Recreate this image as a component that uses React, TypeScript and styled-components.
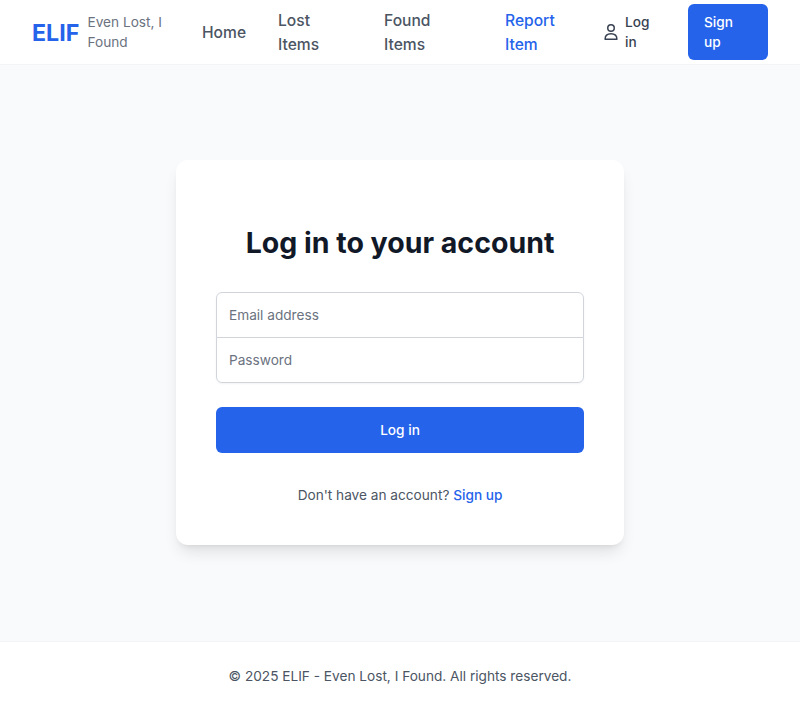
import React from "react";
import styled, { createGlobalStyle } from "styled-components";

const GlobalStyle = createGlobalStyle`
  *, *::before, *::after { box-sizing: border-box; }
  body {
    margin: 0;
    background: #f9fafb;
    font-family: Inter, "Liberation Sans", sans-serif;
    font-size: 16px;
    line-height: 24px;
    color: #111827;
  }
  a { text-decoration: none; }
`;

const Page = styled.div`
  min-height: 710px;
  display: flex;
  flex-direction: column;
`;

const Header = styled.header`
  height: 65px;
  padding: 0 32px;
  display: flex;
  align-items: center;
  background: #fff;
  border-bottom: 1px solid #f3f4f6;
`;

const Brand = styled.a`
  width: 138px;
  flex-shrink: 0;
  display: flex;
  align-items: center;
  gap: 8px;
`;

const Logo = styled.span`
  width: 47.5px;
  flex-shrink: 0;
  padding-top: 2px;
  font-size: 23.2px;
  line-height: 32px;
  font-weight: 700;
  color: #2563eb;
`;

const Tagline = styled.span`
  font-size: 13.65px;
  line-height: 20px;
  color: #6b7280;
`;

const Nav = styled.nav`
  margin-left: 32px;
  padding-top: 2px;
  display: flex;
  align-items: center;
  font-size: 15.6px;
`;

const NavLink = styled.a<{ $width: number; $active?: boolean }>`
  width: ${(p) => p.$width}px;
  padding-right: 32px;
  font-weight: 500;
  color: ${(p) => (p.$active ? "#2563eb" : "#4b5563")};
`;

const Actions = styled.div`
  margin-left: auto;
  display: flex;
  align-items: center;
  font-size: 13.65px;
  line-height: 20px;
  font-weight: 500;
`;

const LoginLink = styled.a`
  display: flex;
  align-items: center;
  gap: 6px;
  width: 85px;
  color: #374151;
`;

const LoginText = styled.span`
  width: 30px;
`;

const SignupButton = styled.a`
  width: 80px;
  height: 56px;
  padding: 8px 16px;
  border-radius: 6px;
  background: #2563eb;
  color: #fff;
`;

const Main = styled.main`
  flex: 1;
  display: flex;
  align-items: flex-start;
  justify-content: center;
  padding-top: 95px;
`;

const Card = styled.section`
  width: 448px;
  height: 385px;
  padding: 65px 40px 40px;
  border-radius: 12px;
  background: #fff;
  box-shadow: 0 10px 15px -3px rgba(0, 0, 0, 0.1), 0 4px 6px -4px rgba(0, 0, 0, 0.1);
`;

const Title = styled.h1`
  margin: 0 0 31px;
  font-size: 28.5px;
  line-height: 36px;
  font-weight: 700;
  text-align: center;
`;

const Fields = styled.div`
  border-radius: 6px;
  box-shadow: 0 1px 2px rgba(0, 0, 0, 0.05);
`;

const Field = styled.input<{ $last?: boolean }>`
  display: block;
  width: 100%;
  height: 46px;
  margin: ${(p) => (p.$last ? "-1px 0 0" : "0")};
  padding: 12px;
  border: 1px solid #d1d5db;
  border-radius: ${(p) => (p.$last ? "0 0 6px 6px" : "6px 6px 0 0")};
  background: #fff;
  font: 400 13.65px/20px Inter, sans-serif;
  outline: none;
  &::placeholder { color: #6b7280; opacity: 1; }
`;

const Submit = styled.button`
  display: block;
  width: 100%;
  height: 46px;
  margin: 24px 0 32px;
  border: 0;
  border-radius: 6px;
  background: #2563eb;
  color: #fff;
  font: 500 13.65px/20px Inter, sans-serif;
`;

const Prompt = styled.p`
  margin: 0;
  font-size: 13.65px;
  line-height: 20px;
  text-align: center;
  color: #4b5563;
`;

const PromptLink = styled.a`
  font-weight: 500;
  color: #2563eb;
`;

const Footer = styled.footer`
  height: 69px;
  padding-top: 24px;
  border-top: 1px solid #f3f4f6;
  background: #fff;
  font-size: 13.65px;
  line-height: 20px;
  text-align: center;
  color: #4b5563;
`;

const UserIcon = () => (
  <svg width="16" height="18" viewBox="0 0 16 18" fill="none" stroke="currentColor" strokeWidth="1.5" strokeLinecap="round" strokeLinejoin="round">
    <circle cx="8" cy="5" r="3.25" />
    <path d="M2.1 16.2C2.1 12.5 4.3 10.8 8 10.8S13.9 12.5 13.9 16.2Z" />
  </svg>
);

export default function App() {
  return (
    <Page>
      <GlobalStyle />
      <Header>
        <Brand href="#">
          <Logo>ELIF</Logo>
          <Tagline>Even Lost, I Found</Tagline>
        </Brand>
        <Nav>
          <NavLink href="#" $width={76}>Home</NavLink>
          <NavLink href="#" $width={106}>Lost Items</NavLink>
          <NavLink href="#" $width={121}>Found Items</NavLink>
          <NavLink href="#" $width={98} $active>Report Item</NavLink>
        </Nav>
        <Actions>
          <LoginLink href="#"><UserIcon /><LoginText>Log in</LoginText></LoginLink>
          <SignupButton href="#">Sign up</SignupButton>
        </Actions>
      </Header>
      <Main>
        <Card>
          <Title>Log in to your account</Title>
          <form onSubmit={(e) => e.preventDefault()}>
            <Fields>
              <Field type="email" placeholder="Email address" />
              <Field type="password" placeholder="Password" $last />
            </Fields>
            <Submit type="submit">Log in</Submit>
          </form>
          <Prompt>Don't have an account? <PromptLink href="#">Sign up</PromptLink></Prompt>
        </Card>
      </Main>
      <Footer>© 2025 ELIF - Even Lost, I Found. All rights reserved.</Footer>
    </Page>
  );
}
